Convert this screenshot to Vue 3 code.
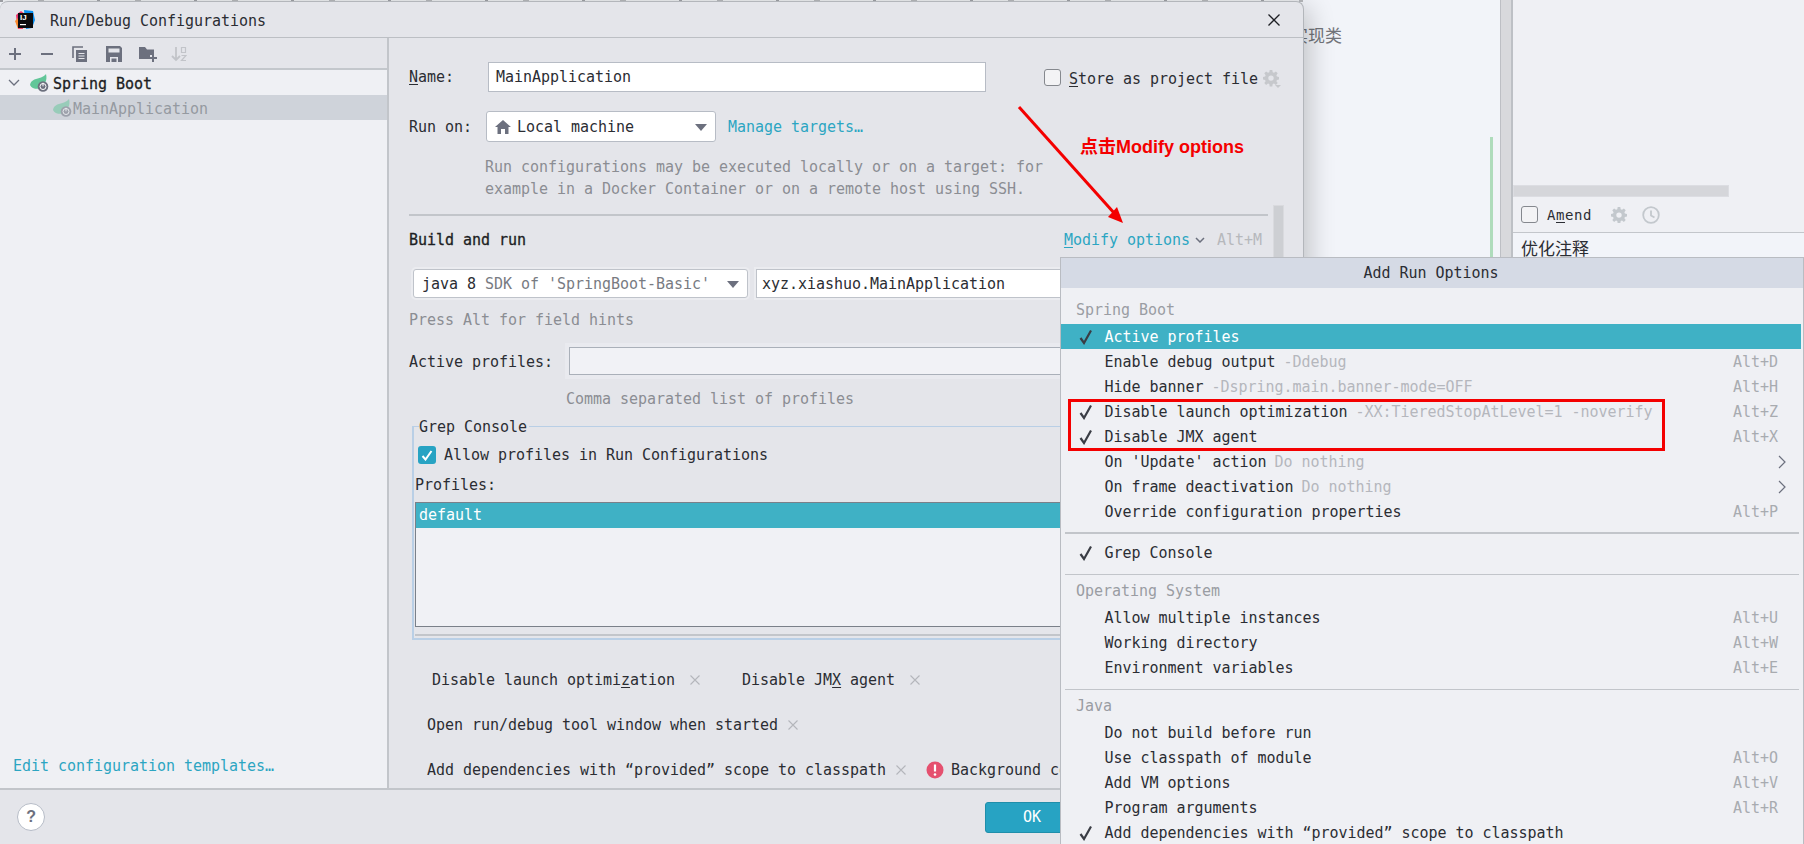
<script setup>
const sections = [
  { title: 'Spring Boot', rows: [
    { t: 'Active profiles', c: 1, sel: 1 },
    { t: 'Enable debug output', h: '-Ddebug', k: 'Alt+D' },
    { t: 'Hide banner', h: '-Dspring.main.banner-mode=OFF', k: 'Alt+H' },
    { t: 'Disable launch optimization', h: '-XX:TieredStopAtLevel=1 -noverify', c: 1, k: 'Alt+Z' },
    { t: 'Disable JMX agent', c: 1, k: 'Alt+X' },
    { t: "On 'Update' action", h: 'Do nothing', arrow: 1 },
    { t: 'On frame deactivation', h: 'Do nothing', arrow: 1 },
    { t: 'Override configuration properties', k: 'Alt+P' },
  ] },
  { rows: [{ t: 'Grep Console', c: 1 }] },
  { title: 'Operating System', rows: [
    { t: 'Allow multiple instances', k: 'Alt+U' },
    { t: 'Working directory', k: 'Alt+W' },
    { t: 'Environment variables', k: 'Alt+E' },
  ] },
  { title: 'Java', rows: [
    { t: 'Do not build before run' },
    { t: 'Use classpath of module', k: 'Alt+O' },
    { t: 'Add VM options', k: 'Alt+V' },
    { t: 'Program arguments', k: 'Alt+R' },
    { t: 'Add dependencies with “provided” scope to classpath', c: 1 },
  ] },
]
</script>

<template>
  <div class="screen">
    <!-- IDE behind the dialog -->
    <div class="ide">
      <div class="ide-left">
        <div class="ide-text"><span class="ide-hint">实现类</span></div>
        <div class="green-stripe"></div>
      </div>
      <div class="splitter"></div>
      <div class="ide-right">
        <div class="commit-space"></div>
        <div class="hscroll"></div>
        <div class="amend">
          <span class="check"></span>
          <span class="amend-label">A<u class="mn">m</u>end</span>
          <svg class="amend-gear" width="16" height="16" viewBox="0 0 16 16"><path fill="#c3c8cd" d="M6.7 0h2.6l.4 2.2 1.3.6L12.900 1.500l1.800 1.800-1.300 1.900.5 1.300 2.100.4v2.600l-2.100.4-.5 1.300 1.300 1.900-1.800 1.800-1.900-1.300-1.300.5-.4 2.400H6.700l-.4-2.400-1.300-.5-1.900 1.300-1.800-1.800 1.300-1.900-.5-1.300L0 9.500V6.900l2.100-.4.500-1.300-1.300-1.900 1.800-1.800 1.900 1.300 1.300-.6zM8 5.400a2.700 2.700 0 1 0 0 5.400 2.700 2.700 0 0 0 0-5.400z"/></svg>
          <svg class="amend-clock" width="18" height="18" viewBox="0 0 18 18"><circle cx="9" cy="9" r="7.800" fill="none" stroke="#c3c8cd" stroke-width="1.800"/><path d="M9 4.500V9.500l3.500 2" fill="none" stroke="#c3c8cd" stroke-width="1.800"/></svg>
        </div>
        <div class="commit-msg">优化注释</div>
      </div>
    </div>
    <div class="top-strip"></div>

    <!-- Dialog window -->
    <section class="dialog">
      <header class="titlebar">
        <svg class="logo" width="20" height="20" viewBox="0 0 20 20">
          <polygon points="1,5 6,1 10,4 5,13 2,15" fill="#f0356f"/>
          <polygon points="0,11 4,7 7,18 3,19" fill="#fb8a2e"/>
          <polygon points="9,0 18,1 20,10 17,18 11,19" fill="#0a8ff0"/>
          <polygon points="3,14 8,10 8,19 3,19" fill="#fc4a6e"/>
          <rect x="3" y="3" width="15" height="15" fill="#0b0b0f"/>
          <text x="5" y="10" class="logo-text">IJ</text>
          <rect x="5" y="14" width="6" height="1.200" fill="#fff"/>
        </svg>
        <span class="title">Run/Debug Configurations</span>
        <svg class="close" width="12" height="12" viewBox="0 0 12 12"><path d="M.5.5l11 11M11.500.5l-11 11" stroke="#1d1f24" stroke-width="1.300" fill="none"/></svg>
      </header>

      <div class="body">
        <aside class="sidebar">
          <div class="toolbar">
            <svg width="14" height="14" viewBox="0 0 14 14"><path d="M7 1v12M1 7h12" stroke="#6c707e" stroke-width="2"/></svg>
            <svg width="14" height="14" viewBox="0 0 14 14"><path d="M1 7h12" stroke="#6c707e" stroke-width="2"/></svg>
            <svg width="16" height="16" viewBox="0 0 16 16"><path d="M1 12V1h10" fill="none" stroke="#6c707e" stroke-width="1.600"/><path d="M4 4h11v12H4z" fill="#6c707e"/><path d="M6.500 7.500h6M6.500 10h6M6.500 12.500h6" stroke="#e4e5ea" stroke-width="1.200"/></svg>
            <svg width="16" height="16" viewBox="0 0 16 16"><path d="M0 0h14l2 2v14H0z" fill="#6c707e"/><path d="M2.500 2.500h11v4h-11z" fill="#e4e5ea"/><path d="M4 11h8v5H4z" fill="#e4e5ea"/><path d="M5.500 12.500h5V16h-5z" fill="#6c707e"/></svg>
            <svg class="folder" width="18" height="16" viewBox="0 0 18 16"><path d="M0 1h6l2 2.500h7V9h-4v4H0z" fill="#6c707e"/><path d="M14 8v8M10 12h8" stroke="#6c707e" stroke-width="2"/></svg>
            <svg class="sort" width="16" height="16" viewBox="0 0 16 16"><path d="M5 1v13M1 10l4 4 4-4" fill="none" stroke="#c2c4c9" stroke-width="1.800"/><path d="M10.500 1.500h4v5h-4zM10.500 9.500h4.500l-4.500 5h4.500" fill="none" stroke="#c2c4c9" stroke-width="1.200"/></svg>
          </div>
          <div class="tree">
            <div class="tree-row group">
              <svg class="chev" width="12" height="8" viewBox="0 0 12 8"><path d="M1 1l5 5 5-5" fill="none" stroke="#6c707e" stroke-width="1.300"/></svg>
              <svg class="spring" width="19" height="18" viewBox="0 0 19 18"><path d="M0 11C1 5 7 5 11 3.500 13 2.800 15 1.500 16 0c.8 3 .5 6-.5 8l-4 6.500C6 15.500 1.500 14.500 0 11z" fill="#62c699"/><circle cx="13" cy="12.500" r="5.300" fill="#6c707e"/><circle cx="13" cy="12.500" r="3" fill="none" stroke="#fff" stroke-width="1"/><path d="M13 8.800v3.500" stroke="#fff" stroke-width="1"/></svg>
              <span class="group-label">Spring Boot</span>
            </div>
            <div class="tree-row selected">
              <svg class="spring" width="19" height="18" viewBox="0 0 19 18" opacity=".5"><path d="M0 11C1 5 7 5 11 3.500 13 2.800 15 1.500 16 0c.8 3 .5 6-.5 8l-4 6.500C6 15.500 1.500 14.500 0 11z" fill="#62c699"/><circle cx="13" cy="12.500" r="5.300" fill="#6c707e"/><circle cx="13" cy="12.500" r="3" fill="none" stroke="#fff" stroke-width="1"/><path d="M13 8.800v3.500" stroke="#fff" stroke-width="1"/></svg>
              <span class="muted-item">MainApplication</span>
            </div>
          </div>
          <a class="link templates">Edit configuration templates…</a>
        </aside>

        <main class="config">
          <div class="form">
            <div class="row name-row">
              <label class="name-label"><u class="mn">N</u>ame:</label>
              <div class="field name-field">MainApplication</div>
              <span class="check store-check"></span>
              <span class="store-label"><u class="mn">S</u>tore as project file</span>
              <svg class="store-gear" width="18" height="18" viewBox="0 0 18 18"><path fill="#c6c8cc" d="M6.700 0h2.600l.4 2.200 1.300.6L12.900 1.500l1.800 1.800-1.300 1.900.5 1.300 2.100.4v2.600l-2.100.4-.5 1.300 1.300 1.900-1.800 1.800-1.900-1.300-1.300.5-.4 2.400H6.700l-.4-2.400-1.300-.5-1.900 1.300-1.800-1.800 1.300-1.900-.5-1.300L0 9.500V6.900l2.100-.4.500-1.300-1.300-1.900 1.800-1.800 1.900 1.300 1.300-.6zM8 5.400a2.700 2.700 0 1 0 0 5.400 2.700 2.700 0 0 0 0-5.400z"/><path d="M12 15h6l-3 3z" fill="#c6c8cc"/></svg>
            </div>
            <div class="row runon-row">
              <label class="runon-label">Run on:</label>
              <div class="combo runon-combo">
                <svg width="16" height="14" viewBox="0 0 16 14"><path d="M8 0l8 7h-2.500v7H10V9H6v5H2.500V7H0z" fill="#6c707e"/></svg>
                <span class="combo-text">Local machine</span>
                <span class="tri"></span>
              </div>
              <a class="link manage">Manage targets…</a>
            </div>
            <p class="help">Run configurations may be executed locally or on a target: for<br>example in a Docker Container or on a remote host using SSH.</p>
            <div class="separator"></div>
            <div class="row build-row">
              <span class="strong">Build and run</span>
              <a class="link modify"><u class="mn">M</u>odify options</a>
              <svg class="modify-chev" width="10" height="6" viewBox="0 0 10 6"><path d="M1 1l4 4 4-4" fill="none" stroke="#6c707e" stroke-width="1.500"/></svg>
              <span class="alt">Alt+M</span>
            </div>
            <div class="row java-row">
              <div class="combo java-combo">
                <span>java 8</span><span class="sdk">&nbsp;SDK of 'SpringBoot-Basic'</span>
                <span class="tri"></span>
              </div>
              <div class="field main-class">xyz.xiashuo.MainApplication</div>
            </div>
            <p class="hint press">Press Alt for field hints</p>
            <div class="row active-row">
              <label class="active-label">Active profiles:</label>
              <div class="field active-field"></div>
            </div>
            <p class="hint comma">Comma separated list of profiles</p>
            <div class="fieldset">
              <div class="legend">Grep Console</div>
              <div class="row allow-row">
                <span class="checked">
                  <svg width="12" height="11" viewBox="0 0 12 11"><path d="M1.500 6l3 3.500L10.500 1" fill="none" stroke="#fff" stroke-width="2"/></svg>
                </span>
                <span>Allow profiles in Run Configurations</span>
              </div>
              <div class="profiles-label">Profiles:</div>
              <div class="list"><div class="list-sel">default</div></div>
              <div class="strip"></div>
            </div>
            <div class="row chips chips-1">
              <span>Disable launch optimi<u class="mn">z</u>ation</span>
              <svg class="x x-wide" width="10" height="10" viewBox="0 0 10 10"><path d="M.5.500l9 9M9.500.500l-9 9" stroke="#b4b6bb" stroke-width="1.100"/></svg>
              <span class="jmx">Disable JM<u class="mn">X</u> agent</span>
              <svg class="x x-wide" width="10" height="10" viewBox="0 0 10 10"><path d="M.5.500l9 9M9.500.500l-9 9" stroke="#b4b6bb" stroke-width="1.100"/></svg>
            </div>
            <div class="row chips chips-2">
              <span>Open run/debug tool window when started</span>
              <svg class="x" width="10" height="10" viewBox="0 0 10 10"><path d="M.5.500l9 9M9.500.500l-9 9" stroke="#b4b6bb" stroke-width="1.100"/></svg>
            </div>
            <div class="row chips chips-3">
              <span>Add dependencies with “provided” scope to classpath</span>
              <svg class="x" width="10" height="10" viewBox="0 0 10 10"><path d="M.5.500l9 9M9.500.500l-9 9" stroke="#b4b6bb" stroke-width="1.100"/></svg>
              <svg class="err" width="18" height="18" viewBox="0 0 18 18"><circle cx="9" cy="9" r="8.500" fill="#e5506f"/><path d="M9 3.500v7" stroke="#fff" stroke-width="2.200"/><circle cx="9" cy="13.500" r="1.300" fill="#fff"/></svg>
              <span class="bg">Background co</span>
            </div>
          </div>
          <div class="vscroll"></div>
        </main>
      </div>

      <footer class="footer">
        <span class="help-btn">?</span>
        <span class="ok">OK</span>
      </footer>
    </section>

    <!-- Annotation -->
    <svg class="arrow" width="130" height="140" viewBox="0 0 130 140">
      <path d="M9 7L105 114" stroke="#f40000" stroke-width="3" fill="none"/>
      <polygon points="113,123 98,117 107,107" fill="#f40000"/>
    </svg>
    <div class="note">点击Modify options</div>

    <!-- Popup -->
    <div class="popup">
      <div class="popup-head">Add Run Options</div>
      <template v-for="(s, i) in sections" :key="i">
        <div v-if="i" class="popup-sep" :class="{ thick: i === 1 }"></div>
        <div v-if="s.title" class="popup-title">{{ s.title }}</div>
        <div class="popup-rows" :class="{ tight: !s.title }">
          <div v-for="r in s.rows" :key="r.t" class="item" :class="{ sel: r.sel }">
            <svg v-if="r.c" class="tick" width="16" height="16" viewBox="0 0 16 16"><path d="M2.500 9l3.500 5L13 1.500" fill="none" stroke="#3a3d45" stroke-width="2.200"/></svg>
            <span v-else class="tick"></span>
            <span class="item-text">{{ r.t }}</span>
            <span v-if="r.h" class="item-hint">{{ r.h }}</span>
            <span v-if="r.k" class="item-key">{{ r.k }}</span>
            <svg v-if="r.arrow" class="item-arrow" width="8" height="14" viewBox="0 0 8 14"><path d="M1 1l6 6-6 6" fill="none" stroke="#6c707e" stroke-width="1.200"/></svg>
          </div>
        </div>
      </template>
      <div class="redbox"></div>
    </div>
  </div>
</template>

<style scoped>
.screen {
  position: relative;
  width: 1804px;
  height: 844px;
  overflow: hidden;
  background: #f2f4f9;
  font-family: "DejaVu Sans Mono", "Liberation Mono", "Noto Sans CJK SC", monospace;
  font-size: 15px;
  letter-spacing: -0.03px;
  line-height: 22px;
  color: #2b2d33;
}
.mn { text-underline-offset: 2px; }

/* IDE */
.ide { display: flex; height: 844px; }
.ide-left { width: 1500px; display: flex; background: #f2f4f9; }
.ide-text { flex: 1; padding: 24px 0 0 1291px; }
.ide-hint { font-family: "Noto Sans CJK SC", sans-serif; font-size: 17px; color: #72747a; letter-spacing: 0; }
.green-stripe { width: 3px; height: 120px; margin: 137px 7px 0 0; background: #afdcbc; }
.splitter { width: 13px; background: #d8d9dc; border-left: 1px solid #bdbfc4; border-right: 2px solid #bdc0c5; box-sizing: border-box; }
.ide-right { flex: 1; display: flex; flex-direction: column; background: #eff0f4; }
.commit-space { height: 185px; }
.hscroll { width: 216px; height: 12px; box-sizing: border-box; background: #d5d6da; border: 1px solid #dcdde2; }
.amend { display: flex; align-items: center; height: 36px; padding-left: 8px; border-bottom: 1px solid #c3c6cb; box-sizing: border-box; }
.check { width: 17px; height: 17px; box-sizing: border-box; border: 1px solid #85888e; border-radius: 3px; background: #f3f3f5; flex-shrink: 0; }
.amend-label { margin-left: 9px; font-size: 14px; letter-spacing: .57px; }
.amend-gear { margin-left: 19px; }
.amend-clock { margin-left: 15px; }
.commit-msg { flex: 1; background: #f2f4f9; padding: 2px 0 0 8px; font-family: "Noto Sans CJK SC", sans-serif; font-size: 17px; line-height: 26px; letter-spacing: 0; }
.top-strip {
  position: absolute; left: 0; top: 0; width: 1303px; height: 2px;
  background: repeating-linear-gradient(90deg, #9fa1a6 0 3px, #eceef1 3px 38px, #b6b8bc 38px 44px, #eceef1 44px 97px);
}

/* Dialog */
.dialog {
  position: absolute; left: 0; top: 1px;
  width: 1304px; height: 843px;
  box-sizing: border-box;
  display: flex; flex-direction: column;
  background: #e4e5ea;
  border-top: 1px solid #b3b6bb;
  border-right: 1px solid #b3b6bb;
  border-radius: 8px 8px 0 0;
  box-shadow: 6px 6px 26px rgba(0, 0, 0, .2);
  overflow: hidden;
}
.titlebar { height: 36px; flex-shrink: 0; display: flex; align-items: center; box-sizing: border-box; border-bottom: 1px solid #bcbfc4; padding-left: 15px; }
.logo { flex-shrink: 0; }
.logo-text { font: bold 8px "Liberation Sans", sans-serif; fill: #fff; letter-spacing: 0; }
.title { margin-left: 15px; padding-top: 2px; }
.close { margin-left: auto; margin-right: 23px; }

.body { height: 750px; display: flex; flex-shrink: 0; }
.sidebar { width: 389px; flex-shrink: 0; box-sizing: border-box; border-right: 2px solid #c2c5ca; display: flex; flex-direction: column; background: #eff0f4; }
.toolbar { height: 32px; box-sizing: border-box; display: flex; align-items: center; background: #e4e5ea; border-bottom: 2px solid #c3c7cc; padding: 1px 0 0 8px; gap: 18px; }
.folder { margin-left: -1px; }
.sort { margin-left: -4px; }
.tree { flex: 1; }
.tree-row { height: 25px; display: flex; align-items: center; }
.group { padding-left: 8px; }
.chev { flex-shrink: 0; }
.group .spring { margin-left: 10px; }
.group-label { margin-left: 4px; padding-top: 2px; -webkit-text-stroke: .3px #1d1f24; color: #1d1f24; }
.selected { background: #cfd3da; padding-left: 53px; }
.muted-item { margin-left: 1px; padding-top: 2px; color: #959aa1; }
.link { color: #2ca5c2; }
.templates { padding: 0 0 11px 13px; }

.config { flex: 1; display: flex; min-width: 0; }
.form { width: 884px; flex-shrink: 0; box-sizing: border-box; padding-left: 20px; }
.row { display: flex; align-items: center; white-space: nowrap; }
.name-row { height: 30px; margin-top: 24px; }
.name-label { width: 79px; flex-shrink: 0; }
.field { height: 100%; box-sizing: border-box; background: #fff; border: 1px solid #b7bcc5; flex-shrink: 0; display: flex; align-items: center; padding-left: 7px; }
.name-field { width: 498px; }
.store-check { margin-left: 58px; }
.store-label { margin-left: 8px; padding-top: 4px; flex-shrink: 0; }
.store-gear { margin: 3px 0 0 5px; flex-shrink: 0; }
.runon-row { height: 31px; margin-top: 19px; }
.runon-label { width: 77px; flex-shrink: 0; }
.combo { height: 100%; box-sizing: border-box; background: #fff; border: 1px solid #b7bcc5; border-radius: 3px; display: flex; align-items: center; flex-shrink: 0; position: relative; }
.runon-combo { width: 230px; padding-left: 8px; }
.combo-text { margin-left: 6px; }
.tri { position: absolute; width: 0; height: 0; border-left: 6px solid transparent; border-right: 6px solid transparent; border-top: 7px solid #6c707e; right: 8px; top: 50%; margin-top: -3px; }
.manage { margin-left: 12px; }
.help { margin: 14px 0 0 76px; color: #8b8d93; white-space: nowrap; }
.separator { width: 859px; height: 2px; margin-top: 14px; background: #c2c5ca; }
.build-row { height: 24px; margin-top: 12px; padding: 0 11px 0 0; box-sizing: content-box; }
.strong { -webkit-text-stroke: .3px #1d1f24; color: #1d1f24; }
.modify { margin-left: auto; }
.modify-chev { margin: 0 12px 0 5px; }
.alt { color: #b6b8bc; }
.java-row { height: 29px; margin-top: 17px; }
.java-combo { width: 335px; margin-left: 4px; padding-left: 8px; box-shadow: 0 0 0 2px #ebecf0; border-color: #bfc3ca; }
.sdk { color: #787b82; }
.main-class { width: 500px; margin-left: 8px; padding-left: 5px; box-shadow: 0 0 0 2px #ebecf0; border-color: #bfc3ca; }
.hint { color: #8b8d93; margin: 11px 0 0; white-space: nowrap; }
.active-row { height: 28px; margin-top: 16px; }
.active-label { width: 160px; padding-top: 2px; flex-shrink: 0; }
.active-field { width: 560px; background: #f1f2f6; border-color: #aab0b9; box-shadow: 0 0 0 4px #e9eaef; }
.comma { margin: 13px 0 0 157px; }
.fieldset {
  width: 850px; height: 214px; margin: 16px 0 0 3px; box-sizing: border-box;
  border-top: 1px solid #b9cfe6; border-left: 2px solid #b9cfe6; border-bottom: 2px solid #b9cfe6;
  display: flex; flex-direction: column; padding-left: 1px;
}
.legend { align-self: flex-start; margin: -11px 0 0 4px; background: #e4e5ea; white-space: nowrap; padding-right: 2px; }
.allow-row { height: 22px; margin: 6px 0 0 3px; }
.checked { width: 18px; height: 18px; border-radius: 3px; background: #27a3c3; display: flex; align-items: center; justify-content: center; margin-right: 8px; flex-shrink: 0; }
.profiles-label { margin-top: 8px; }
.list { height: 125px; margin-top: 6px; box-sizing: border-box; border: 1px solid #7a8089; background: #f0f1f5; flex-shrink: 0; }
.list-sel { height: 25px; background: #3fb1c5; color: #fff; padding-left: 3px; line-height: 25px; }
.strip { height: 2px; margin-top: 7px; background: #c2c5ca; }
.chips { height: 24px; }
.chips-1 { margin: 28px 0 0 23px; }
.chips-2 { margin: 21px 0 0 18px; }
.chips-3 { margin: 21px 0 0 18px; }
.x { margin-left: 10px; flex-shrink: 0; }
.x-wide { margin-left: 15px; }
.jmx { margin-left: 42px; }
.err { margin-left: 20px; flex-shrink: 0; }
.bg { margin-left: 7px; }
.vscroll { width: 11px; height: 100px; margin-top: 167px; background: #cdcfd3; flex-shrink: 0; box-sizing: border-box; border: 1px solid #d9dade; }

.footer { flex: 1; box-sizing: border-box; border-top: 2px solid #c2c5ca; display: flex; align-items: center; padding: 0 0 0 17px; }
.help-btn {
  width: 28px; height: 28px; box-sizing: border-box; border-radius: 50%; background: #fff; border: 1px solid #b6bcc7;
  display: flex; align-items: center; justify-content: center;
  font: bold 16px "Liberation Sans", sans-serif; color: #6c707e;
}
.ok {
  width: 94px; height: 31px; margin-left: 940px; box-sizing: border-box; border-radius: 3px;
  background: #27a3c3; border: 1px solid #1f8eaa; color: #fff; display: flex; align-items: center; justify-content: center;
}

/* Annotation */
.arrow { position: absolute; left: 1010px; top: 100px; }
.note {
  position: absolute; left: 1080px; top: 135px;
  font: bold 18px/24px "Liberation Sans", "Noto Sans CJK SC", sans-serif;
  letter-spacing: 0; color: #f40000; white-space: nowrap;
}

/* Popup */
.popup {
  position: absolute; left: 1060px; top: 257px; width: 744px; height: 587px;
  box-sizing: border-box; background: #eff0f4;
  border: 1px solid #b9bcc2; border-bottom: 0;
  overflow: hidden;
}
.popup-head { height: 30px; background: #d5dae5; text-align: center; line-height: 30px; padding-right: 2px; }
.popup-title { height: 24px; line-height: 26px; color: #9a9da3; padding-left: 15px; margin-top: 9px; }
.popup-sep { height: 1px; margin: 9px 4px 0 4px; background: #c2c5ca; }
.popup-sep.thick { height: 2px; margin-top: 8px; }
.popup-sep + .popup-title { margin-top: 3px; }
.popup-rows { margin-top: 3px; margin-right: 2px; }
.popup-rows.tight { margin-top: 6px; }
.item { height: 25px; display: flex; align-items: center; padding: 0 23px 0 17px; white-space: nowrap; }
.item.sel { background: #3fb1c5; color: #fff; }
.tick { width: 16px; height: 16px; flex-shrink: 0; }
.item-text { margin-left: 10.500px; }
.item-hint { margin-left: 8px; color: #b5b7bd; }
.item-key { margin-left: auto; color: #a8abb0; }
.item-arrow { margin-left: auto; margin-right: -8px; }
.redbox { position: absolute; left: 7px; top: 141px; width: 597px; height: 52px; box-sizing: border-box; border: 3px solid #f40000; }
</style>
